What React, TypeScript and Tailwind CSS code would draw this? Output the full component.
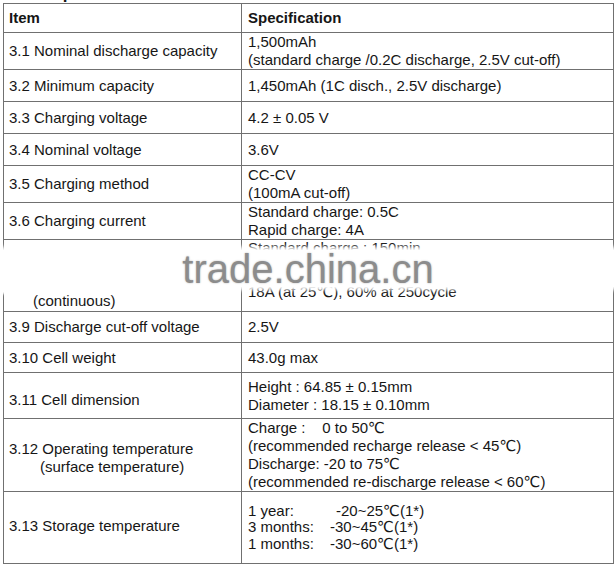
import type { ReactNode } from 'react'

type Row = {
  item: ReactNode
  spec: ReactNode
  h: string
  itemClass?: string
  specClass?: string
}

const rows: Row[] = [
  {
    item: '3.1 Nominal discharge capacity',
    spec: (
      <>
        1,500mAh
        <br />
        (standard charge /0.2C discharge, 2.5V cut-off)
      </>
    ),
    h: 'h-[36px]',
  },
  { item: '3.2 Minimum capacity', spec: '1,450mAh (1C disch., 2.5V discharge)', h: 'h-[32px]' },
  { item: '3.3 Charging voltage', spec: '4.2 ± 0.05 V', h: 'h-[32px]' },
  { item: '3.4 Nominal voltage', spec: '3.6V', h: 'h-[32px]' },
  {
    item: '3.5 Charging method',
    spec: (
      <>
        CC-CV
        <br />
        (100mA cut-off)
      </>
    ),
    h: 'h-[34px]',
  },
  {
    item: '3.6 Charging current',
    spec: (
      <>
        Standard charge: 0.5C
        <br />
        Rapid charge: 4A
      </>
    ),
    h: 'h-[35px]',
  },
  {
    item: '3.7 Charging time',
    spec: (
      <>
        Standard charge : 150min
        <br />
        Rapid charge : 60min
      </>
    ),
    h: 'h-[32px]',
    specClass: 'align-top leading-[16px]',
  },
  {
    item: (
      <>
        3.8 Max. discharge current
        <br />
        <span className="pl-[24px]">(continuous)</span>
      </>
    ),
    spec: '18A (at 25℃), 60% at 250cycle',
    h: 'h-[39px]',
  },
  { item: '3.9 Discharge cut-off voltage', spec: '2.5V', h: 'h-[31px]' },
  { item: '3.10 Cell weight', spec: '43.0g max', h: 'h-[30px]' },
  {
    item: '3.11 Cell dimension',
    spec: (
      <>
        Height : 64.85 ± 0.15mm
        <br />
        Diameter : 18.15 ± 0.10mm
      </>
    ),
    h: 'h-[46px]',
    itemClass: 'pt-[9px]',
  },
  {
    item: (
      <>
        3.12 Operating temperature
        <br />
        <span className="pl-[31px]">(surface temperature)</span>
      </>
    ),
    spec: (
      <>
        <span className="whitespace-pre">Charge :    0 to 50℃</span>
        <br />
        (recommended recharge release &lt; 45℃)
        <br />
        Discharge: -20 to 75℃
        <br />
        (recommended re-discharge release &lt; 60℃)
      </>
    ),
    h: 'h-[72px]',
    itemClass: 'pt-[5px]',
  },
  {
    item: '3.13 Storage temperature',
    spec: (
      <>
        <div className="flex">
          <span className="w-[88px]">1 year:</span>
          <span>-20~25℃(1*)</span>
        </div>
        <div className="flex">
          <span className="w-[82px]">3 months:</span>
          <span>-30~45℃(1*)</span>
        </div>
        <div className="flex">
          <span className="w-[82px]">1 months:</span>
          <span>-30~60℃(1*)</span>
        </div>
      </>
    ),
    h: 'h-[72px]',
    itemClass: 'pb-[3px]',
    specClass: 'leading-[16.5px]',
  },
]

export default function App() {
  return (
    <div
      className="relative w-[616px] h-[565px] overflow-hidden bg-white text-[#161616]"
      style={{ fontFamily: '"Liberation Sans", Arial, "DejaVu Sans", sans-serif' }}
    >
      {/* heading above the table, only its descenders show */}
      <div className="h-[3px] overflow-hidden">
        <div className="-mt-[15px] pl-[9px] text-[17px] leading-[18px] font-bold">
          3.&nbsp;&nbsp;&nbsp;&nbsp;&nbsp;&nbsp;Specification
        </div>
      </div>

      <table className="ml-[3px] w-[611px] border-collapse text-[15px] leading-[18px]">
        <colgroup>
          <col className="w-[238px]" />
          <col />
        </colgroup>
        <tbody>
          <tr className="h-[29px]">
            <th className="border border-[#707070] pl-[5px] text-left font-bold">Item</th>
            <th className="border border-[#707070] pl-[6px] text-left font-bold">Specification</th>
          </tr>
          {rows.map((r, i) => (
            <tr key={i} className={r.h}>
              <td className={`border border-[#707070] pl-[5px] align-middle ${r.itemClass ?? ''}`}>
                {r.item}
              </td>
              <td className={`border border-[#707070] pl-[6px] align-middle ${r.specClass ?? ''}`}>
                {r.spec}
              </td>
            </tr>
          ))}
        </tbody>
      </table>

      {/* watermark strip */}
      <div className="absolute left-0 top-[250px] w-[616px] h-[37px] bg-white shadow-[0_0_4px_3px_white]">
        <div className="absolute left-0 top-full w-[236px] h-[5px] bg-white shadow-[0_0_3px_2px_white]" />
        <div className="absolute left-0 top-[-1px] w-full text-center text-[40px] leading-[40px] text-[#8c8c8c] [text-shadow:0_0_2px_#b5b5b5]">
          trade.china.cn
        </div>
      </div>
    </div>
  )
}
